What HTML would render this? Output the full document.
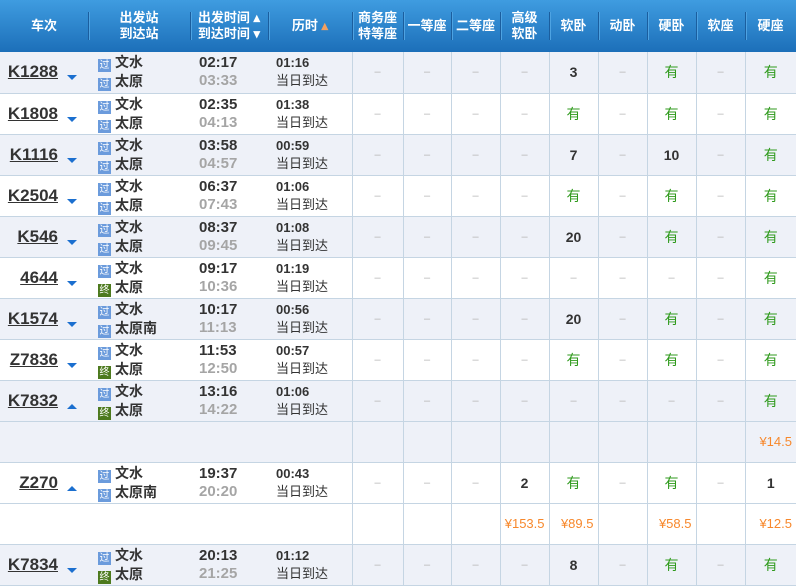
<!DOCTYPE html>
<html><head><meta charset="utf-8"><style>
*{margin:0;padding:0;box-sizing:border-box}
body{width:796px;height:583px;overflow:hidden;background:#fff;font-family:"Liberation Sans","Noto Sans CJK SC",sans-serif;color:#333}
table{border-collapse:collapse;table-layout:fixed;width:796px}
th{height:52px;color:#fff;font-size:13px;font-weight:bold;line-height:16px;background:linear-gradient(#3f9ce0,#1c6fb9);text-align:center;position:relative;font-family:"Liberation Sans","Noto Sans CJK SC",sans-serif}
th.s:before{content:"";position:absolute;left:0;top:12px;height:28px;border-left:1px solid #1b5e9e;}
th.s:after{content:"";position:absolute;left:1px;top:12px;height:28px;border-left:1px solid #4ea3e2;}
td{height:41px;border-bottom:1px solid #c5d5e3;text-align:center;font-size:13px;vertical-align:middle;padding:0}
td.v{border-left:1px solid #c5d5e3;color:#b5b5b5;font-size:11px}
tr.g td{background:#eef1f8}
.y{color:#2f9a1c!important;font-size:14px!important}
.n{color:#333!important;font-weight:bold;font-size:14px!important}
.p{color:#f7882c!important;font-size:13px!important;text-align:right;padding-right:4px}
.c{position:relative}
.tn{position:absolute;right:30px;top:10px;font-size:17px;font-weight:bold;text-decoration:underline;color:#333;font-family:"Liberation Sans",sans-serif}
.ar{position:absolute;left:67px;top:23px;width:0;height:0;border-left:5px solid transparent;border-right:5px solid transparent;border-top:5px solid #1b6fcf}
.ar.u{border-top:0;border-bottom:5px solid #1b6fcf;top:23px}
.st{text-align:left;padding-left:10px;font-weight:bold;font-size:14px;line-height:18px}
.b{display:inline-block;width:13px;height:13px;background:#6b9bdc;color:#fff;font-size:10px;line-height:13px;text-align:center;margin-right:4px;vertical-align:-1px;font-weight:normal}
.b.e{background:#4d7a1e}
.tm{text-align:left;padding-left:9px;font-weight:bold;font-size:15px;line-height:18px}
.tm span{color:#a5a5a5;display:block}
.du{text-align:left;padding-left:8px;font-size:13px;line-height:18px}
.du b{display:block}
</style></head><body>
<table>
<colgroup><col style="width:88px"><col style="width:102px"><col style="width:78px"><col style="width:84px"><col style="width:51px"><col style="width:48px"><col style="width:49px"><col style="width:49px"><col style="width:49px"><col style="width:49px"><col style="width:49px"><col style="width:49px"><col style="width:51px"></colgroup>
<tr><th>车次</th><th class="s">出发站<br>到达站</th><th class="s">出发时间 ▴<br>到达时间 ▾</th><th class="s">历时 <span style="color:#f4a060">▴</span></th><th class="s">商务座<br>特等座</th><th class="s">一等座</th><th class="s">二等座</th><th class="s">高级<br>软卧</th><th class="s">软卧</th><th class="s">动卧</th><th class="s">硬卧</th><th class="s">软座</th><th class="s">硬座</th></tr>

<tr class="g"><td class="c"><span class="tn">K1288</span><span class="ar"></span></td><td class="st"><span class="b">过</span>文水<br><span class="b">过</span>太原</td><td class="tm">02:17<span>03:33</span></td><td class="du"><b>01:16</b>当日到达</td><td class="v">–</td><td class="v">–</td><td class="v">–</td><td class="v">–</td><td class="v n">3</td><td class="v">–</td><td class="v y">有</td><td class="v">–</td><td class="v y">有</td></tr>

<tr><td class="c"><span class="tn">K1808</span><span class="ar"></span></td><td class="st"><span class="b">过</span>文水<br><span class="b">过</span>太原</td><td class="tm">02:35<span>04:13</span></td><td class="du"><b>01:38</b>当日到达</td><td class="v">–</td><td class="v">–</td><td class="v">–</td><td class="v">–</td><td class="v y">有</td><td class="v">–</td><td class="v y">有</td><td class="v">–</td><td class="v y">有</td></tr>

<tr class="g"><td class="c"><span class="tn">K1116</span><span class="ar"></span></td><td class="st"><span class="b">过</span>文水<br><span class="b">过</span>太原</td><td class="tm">03:58<span>04:57</span></td><td class="du"><b>00:59</b>当日到达</td><td class="v">–</td><td class="v">–</td><td class="v">–</td><td class="v">–</td><td class="v n">7</td><td class="v">–</td><td class="v n">10</td><td class="v">–</td><td class="v y">有</td></tr>

<tr><td class="c"><span class="tn">K2504</span><span class="ar"></span></td><td class="st"><span class="b">过</span>文水<br><span class="b">过</span>太原</td><td class="tm">06:37<span>07:43</span></td><td class="du"><b>01:06</b>当日到达</td><td class="v">–</td><td class="v">–</td><td class="v">–</td><td class="v">–</td><td class="v y">有</td><td class="v">–</td><td class="v y">有</td><td class="v">–</td><td class="v y">有</td></tr>

<tr class="g"><td class="c"><span class="tn">K546</span><span class="ar"></span></td><td class="st"><span class="b">过</span>文水<br><span class="b">过</span>太原</td><td class="tm">08:37<span>09:45</span></td><td class="du"><b>01:08</b>当日到达</td><td class="v">–</td><td class="v">–</td><td class="v">–</td><td class="v">–</td><td class="v n">20</td><td class="v">–</td><td class="v y">有</td><td class="v">–</td><td class="v y">有</td></tr>

<tr><td class="c"><span class="tn">4644</span><span class="ar"></span></td><td class="st"><span class="b">过</span>文水<br><span class="b e">终</span>太原</td><td class="tm">09:17<span>10:36</span></td><td class="du"><b>01:19</b>当日到达</td><td class="v">–</td><td class="v">–</td><td class="v">–</td><td class="v">–</td><td class="v">–</td><td class="v">–</td><td class="v">–</td><td class="v">–</td><td class="v y">有</td></tr>

<tr class="g"><td class="c"><span class="tn">K1574</span><span class="ar"></span></td><td class="st"><span class="b">过</span>文水<br><span class="b">过</span>太原南</td><td class="tm">10:17<span>11:13</span></td><td class="du"><b>00:56</b>当日到达</td><td class="v">–</td><td class="v">–</td><td class="v">–</td><td class="v">–</td><td class="v n">20</td><td class="v">–</td><td class="v y">有</td><td class="v">–</td><td class="v y">有</td></tr>

<tr><td class="c"><span class="tn">Z7836</span><span class="ar"></span></td><td class="st"><span class="b">过</span>文水<br><span class="b e">终</span>太原</td><td class="tm">11:53<span>12:50</span></td><td class="du"><b>00:57</b>当日到达</td><td class="v">–</td><td class="v">–</td><td class="v">–</td><td class="v">–</td><td class="v y">有</td><td class="v">–</td><td class="v y">有</td><td class="v">–</td><td class="v y">有</td></tr>

<tr class="g"><td class="c"><span class="tn">K7832</span><span class="ar u"></span></td><td class="st"><span class="b">过</span>文水<br><span class="b e">终</span>太原</td><td class="tm">13:16<span>14:22</span></td><td class="du"><b>01:06</b>当日到达</td><td class="v">–</td><td class="v">–</td><td class="v">–</td><td class="v">–</td><td class="v">–</td><td class="v">–</td><td class="v">–</td><td class="v">–</td><td class="v y">有</td></tr>

<tr class="g"><td></td><td></td><td></td><td></td><td class="v"></td><td class="v"></td><td class="v"></td><td class="v"></td><td class="v"></td><td class="v"></td><td class="v"></td><td class="v"></td><td class="v p">¥14.5</td></tr>

<tr><td class="c"><span class="tn">Z270</span><span class="ar u"></span></td><td class="st"><span class="b">过</span>文水<br><span class="b">过</span>太原南</td><td class="tm">19:37<span>20:20</span></td><td class="du"><b>00:43</b>当日到达</td><td class="v">–</td><td class="v">–</td><td class="v">–</td><td class="v n">2</td><td class="v y">有</td><td class="v">–</td><td class="v y">有</td><td class="v">–</td><td class="v n">1</td></tr>

<tr><td></td><td></td><td></td><td></td><td class="v"></td><td class="v"></td><td class="v"></td><td class="v p">¥153.5</td><td class="v p">¥89.5</td><td class="v"></td><td class="v p">¥58.5</td><td class="v"></td><td class="v p">¥12.5</td></tr>

<tr class="g"><td class="c"><span class="tn">K7834</span><span class="ar"></span></td><td class="st"><span class="b">过</span>文水<br><span class="b e">终</span>太原</td><td class="tm">20:13<span>21:25</span></td><td class="du"><b>01:12</b>当日到达</td><td class="v">–</td><td class="v">–</td><td class="v">–</td><td class="v">–</td><td class="v n">8</td><td class="v">–</td><td class="v y">有</td><td class="v">–</td><td class="v y">有</td></tr>
</table>
</body></html>
